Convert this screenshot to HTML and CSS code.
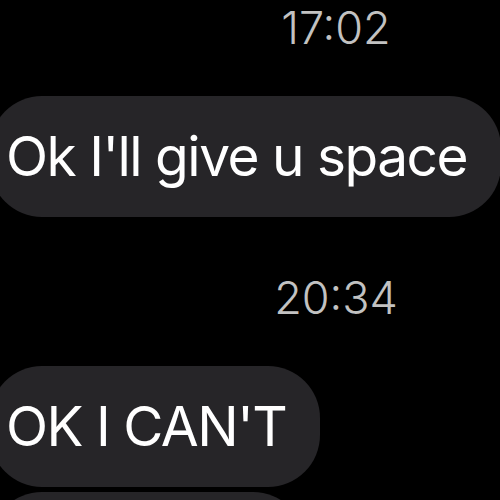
FILE: index.html
```html
<!DOCTYPE html>
<html>
<head>
<meta charset="utf-8">
<link rel="stylesheet" href="styles.css">
</head>
<body>
<div class="thread">
  <div class="stamp stamp-first">17:02</div>
  <div class="bubble">Ok I'll give u space</div>
  <div class="stamp">20:34</div>
  <div class="bubble">OK I CAN'T</div>
  <div class="bubble bubble-next">&nbsp;</div>
</div>
</body>
</html>
```
FILE: styles.css
```css
html, body {
  margin: 0;
  padding: 0;
  background: #000;
  width: 500px;
  height: 500px;
  overflow: hidden;
}
.thread {
  display: flex;
  flex-direction: column;
  align-items: flex-start;
  font-family: Inter, "Liberation Sans", Arial, sans-serif;
}
.stamp {
  align-self: stretch;
  box-sizing: border-box;
  padding-left: 172px;
  text-align: center;
  font-size: 45px;
  line-height: 46px;
  font-weight: 300;
  color: #c2c2c2;
  margin-top: 58px;
  margin-bottom: 45px;
}
.stamp-first {
  margin-top: 5px;
}
.bubble {
  background: #262528;
  color: #fff;
  font-size: 55px;
  line-height: 57px;
  font-weight: 400;
  letter-spacing: -1.5px;
  padding: 32px 34px 32px 16px;
  margin-left: -10px;
  border-radius: 52px;
  white-space: nowrap;
}
.bubble-next {
  margin-top: 5px;
  width: 265px;
}
```
